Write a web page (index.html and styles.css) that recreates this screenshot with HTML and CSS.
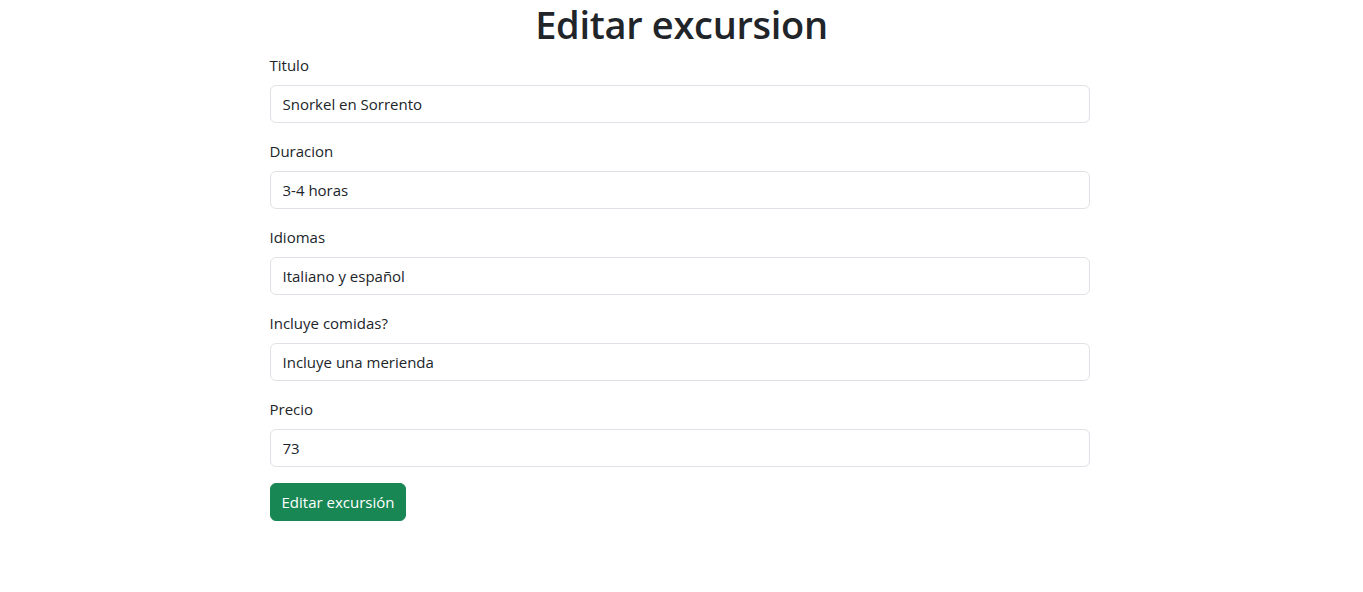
FILE: index.html
```html
<!DOCTYPE html>
<html lang="es">
<head>
<meta charset="utf-8">
<title>Editar excursion</title>
<link rel="stylesheet" href="styles.css">
</head>
<body>
<main class="page">
  <h1 class="title">Editar excursion</h1>
  <form class="form">
    <div class="field">
      <label class="label" for="titulo">Titulo</label>
      <input class="input" id="titulo" type="text" value="Snorkel en Sorrento">
    </div>
    <div class="field">
      <label class="label" for="duracion">Duracion</label>
      <input class="input" id="duracion" type="text" value="3-4 horas">
    </div>
    <div class="field">
      <label class="label" for="idiomas">Idiomas</label>
      <input class="input" id="idiomas" type="text" value="Italiano y español">
    </div>
    <div class="field">
      <label class="label" for="comidas">Incluye comidas?</label>
      <input class="input" id="comidas" type="text" value="Incluye una merienda">
    </div>
    <div class="field">
      <label class="label" for="precio">Precio</label>
      <input class="input" id="precio" type="text" value="73">
    </div>
    <button class="btn" type="button">Editar excursión</button>
  </form>
</main>
</body>
</html>
```
FILE: styles.css
```css
* { box-sizing: border-box; }
html, body { margin: 0; padding: 0; background: #fff; }
body {
  font-family: "Open Sans", "Noto Sans", "Liberation Sans", sans-serif;
  font-size: 15px;
  line-height: 24px;
  color: #212529;
}
.page {
  width: 824px;
  margin: 0 auto;
  padding-right: 4px;
}
.title {
  margin: 0 0 5px;
  padding-left: 4px;
  font-size: 38px;
  line-height: 48px;
  font-weight: 600;
  text-align: center;
  color: #212529;
  letter-spacing: -0.3px;
}
.form { display: flex; flex-direction: column; }
.field { display: flex; flex-direction: column; margin-bottom: 16px; }
.label { display: block; margin-bottom: 8px; height: 24px; }
.input {
  display: block;
  width: 100%;
  height: 38px;
  padding: 6px 12px;
  font: inherit;
  color: #212529;
  background: #fff;
  border: 1px solid #dee2e6;
  border-radius: 6px;
  outline: none;
}
.btn {
  align-self: flex-start;
  height: 38px;
  padding: 6px 11px;
  font: inherit;
  color: #fff;
  background: #198754;
  border: 1px solid #198754;
  border-radius: 6px;
  cursor: pointer;
}
```
